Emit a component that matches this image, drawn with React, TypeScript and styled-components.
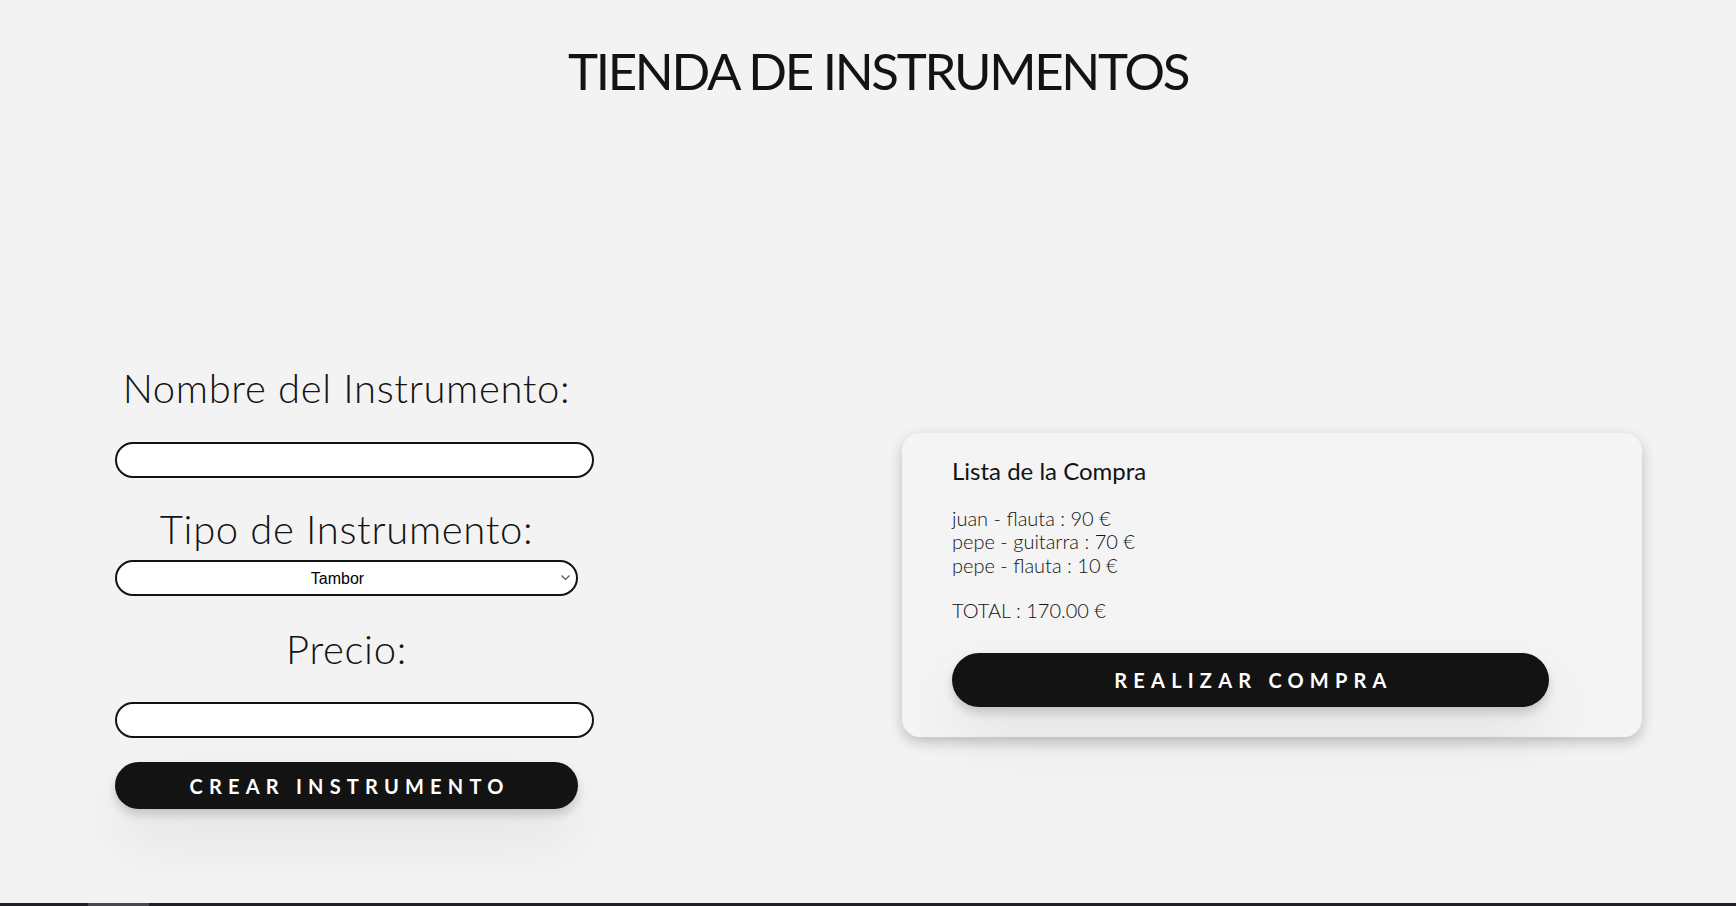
import React from "react";
import styled, { createGlobalStyle } from "styled-components";

const INK = "#131313";
const PAGE_BG = "#f3f3f3";
const FONT = `Lato, "Open Sans", "Noto Sans", sans-serif`;

const GlobalStyle = createGlobalStyle`
	html, body {
		margin: 0;
		padding: 0;
		background: ${PAGE_BG};
		color: ${INK};
		font-family: ${FONT};
	}
	* {
		box-sizing: border-box;
	}
`;

const Page = styled.div`
	min-height: 100vh;
	display: flex;
	flex-direction: column;
`;

const Header = styled.header`
	padding: 40px 0 0 20px;
	display: flex;
	justify-content: center;
`;

const Title = styled.h1`
	margin: 0;
	font-size: 51px;
	line-height: 62px;
	font-weight: 400;
	letter-spacing: -2.3px;
	color: ${INK};
`;

const Main = styled.main`
	flex: 1;
	display: flex;
	align-items: flex-start;
	margin-top: 263px;
	padding-left: 115px;
	gap: 324px;
`;

const Form = styled.form`
	width: 463px;
	display: flex;
	flex-direction: column;
	align-items: flex-start;
`;

const Label = styled.label<{ $gap: number }>`
	align-self: stretch;
	text-align: center;
	font-size: 40px;
	line-height: 46px;
	font-weight: 300;
	letter-spacing: 0.65px;
	margin-bottom: ${(p) => p.$gap}px;
`;

const TextInput = styled.input<{ $after: number }>`
	width: 479px;
	height: 36px;
	margin: 0 0 ${(p) => p.$after}px;
	padding: 0 14px;
	border: 2px solid ${INK};
	border-radius: 20px;
	background: #fff;
	font-family: "Liberation Sans", sans-serif;
	font-size: 16px;
	outline: none;
`;

const SelectWrap = styled.div`
	position: relative;
	width: 463px;
	height: 36px;
	margin-bottom: 30px;
`;

const Select = styled.select`
	appearance: none;
	width: 100%;
	height: 100%;
	padding: 0 18px 0 0;
	border: 2px solid ${INK};
	border-radius: 20px;
	background: #fff;
	color: #000;
	font-family: "Liberation Sans", Arial, sans-serif;
	font-size: 16px;
	text-align: center;
	text-align-last: center;
	outline: none;
`;

const Chevron = styled.svg`
	position: absolute;
	right: 8px;
	top: 15px;
	pointer-events: none;
`;

const PillButton = styled.button<{ $width: number; $height: number }>`
	width: ${(p) => p.$width}px;
	height: ${(p) => p.$height}px;
	border: none;
	border-radius: 30px;
	background: ${INK};
	color: #fff;
	font-family: ${FONT};
	font-size: 20px;
	font-weight: 700;
	letter-spacing: 6.2px;
	padding: 0 0 0 6px;
	cursor: pointer;
	box-shadow: 0 6px 10px rgba(0, 0, 0, 0.16), 0 30px 60px rgba(0, 0, 0, 0.07);
`;

const Card = styled.section`
	margin-top: 68px;
	width: 740px;
	height: 304px;
	padding: 24px 0 30px 50px;
	border-radius: 18px;
	background: #f4f4f4;
	box-shadow: 0 5px 14px rgba(0, 0, 0, 0.22);
	display: flex;
	flex-direction: column;
	align-items: flex-start;
`;

const CardTitle = styled.h3`
	margin: 0 0 21.5px;
	font-size: 24px;
	line-height: 28px;
	font-weight: 400;
`;

const ItemList = styled.ul`
	margin: 0 0 21.5px;
	padding: 0;
	list-style: none;
`;

const Line = styled.li`
	font-size: 20px;
	line-height: 23.5px;
	font-weight: 300;
`;

const Total = styled.p`
	margin: 0 0 31px;
	font-size: 20px;
	line-height: 23.5px;
	font-weight: 300;
`;

const BottomBar = styled.div`
	height: 3px;
	background: #221e26;
	display: flex;
	padding-left: 88px;
`;

const BarThumb = styled.div`
	width: 61px;
	background: #4a4650;
`;

const compras = [
  { cliente: "juan", instrumento: "flauta", precio: 90 },
  { cliente: "pepe", instrumento: "guitarra", precio: 70 },
  { cliente: "pepe", instrumento: "flauta", precio: 10 },
];

export default function App() {
  const total = compras.reduce((acc, c) => acc + c.precio, 0);

  return (
    <Page>
      <GlobalStyle />
      <Header>
        <Title>TIENDA DE INSTRUMENTOS</Title>
      </Header>
      <Main>
        <Form onSubmit={(e) => e.preventDefault()}>
          <Label $gap={31} htmlFor="nombre">Nombre del Instrumento:</Label>
          <TextInput id="nombre" type="text" $after={28} />
          <Label $gap={8} htmlFor="tipo">Tipo de Instrumento:</Label>
          <SelectWrap>
            <Select id="tipo" defaultValue="Tambor">
              <option>Guitarra</option>
              <option>Flauta</option>
              <option>Tambor</option>
            </Select>
            <Chevron width="9" height="6" viewBox="0 0 9 6">
              <polyline points="0.5,0.5 4.5,4.5 8.5,0.5" fill="none" stroke="#555" strokeWidth="1.2" />
            </Chevron>
          </SelectWrap>
          <Label $gap={30} htmlFor="precio">Precio:</Label>
          <TextInput id="precio" type="text" $after={24} />
          <PillButton type="submit" $width={463} $height={47}>
            CREAR INSTRUMENTO
          </PillButton>
        </Form>
        <Card>
          <CardTitle>Lista de la Compra</CardTitle>
          <ItemList>
            {compras.map((c, i) => (
              <Line key={i}>
                {c.cliente} - {c.instrumento} : {c.precio} €
              </Line>
            ))}
          </ItemList>
          <Total>TOTAL : {total.toFixed(2)} €</Total>
          <PillButton type="button" $width={597} $height={54}>
            REALIZAR COMPRA
          </PillButton>
        </Card>
      </Main>
      <BottomBar>
        <BarThumb />
      </BottomBar>
    </Page>
  );
}
